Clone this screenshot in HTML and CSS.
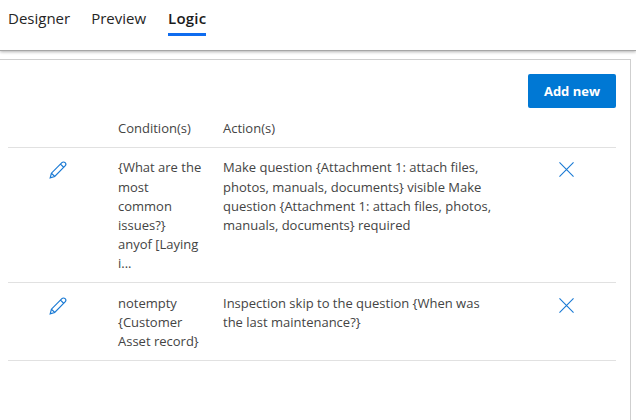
FILE: index.html
```html
<!DOCTYPE html>
<html lang="en">
<head>
    <meta charset="UTF-8">
    <title>Logic</title>
    <link rel="stylesheet" href="styles.css">
</head>
<body>
    <!-- Tabs -->
    <div class="tabs">
        <span class="tab">Designer</span>
        <span class="tab">Preview</span>
        <span class="tab active">Logic</span>
    </div>

    <div class="panel">
        <div class="toolbar">
            <button class="btn">Add new</button>
        </div>

        <div class="row head">
            <div></div>
            <div>Condition(s)</div>
            <div>Action(s)</div>
            <div></div>
        </div>

        <div class="row">
            <div class="icon-cell">
                <svg class="icon pencil" viewBox="0 0 18 18"><path d="M1.2 16.8l1.2-4.6L12.9 1.7c.9-.9 2.3-.9 3.2 0 .9.9.9 2.300 0 3.200L5.700 15.500zM2.400 12.200l3.300 3.300M11.500 3.100l3.400 3.400"/></svg>
            </div>
            <div class="cell">{What are the most common issues?}<br>anyof [Laying i...</div>
            <div class="cell action">Make question {Attachment 1: attach files, photos, manuals, documents} visible Make question {Attachment 1: attach files, photos, manuals, documents} required</div>
            <div class="icon-cell">
                <svg class="icon cross" viewBox="0 0 16 16"><path d="M.5.5l15 15M15.500.5l-15 15"/></svg>
            </div>
        </div>

        <div class="row">
            <div class="icon-cell">
                <svg class="icon pencil" viewBox="0 0 18 18"><path d="M1.2 16.8l1.2-4.6L12.9 1.7c.9-.9 2.3-.9 3.2 0 .9.9.9 2.300 0 3.200L5.700 15.500zM2.400 12.200l3.300 3.300M11.500 3.100l3.400 3.400"/></svg>
            </div>
            <div class="cell">notempty {Customer Asset record}</div>
            <div class="cell action">Inspection skip to the question {When was the last maintenance?}</div>
            <div class="icon-cell">
                <svg class="icon cross" viewBox="0 0 16 16"><path d="M.5.5l15 15M15.500.5l-15 15"/></svg>
            </div>
        </div>
    </div>
</body>
</html>
```

FILE: styles.css
```css
body {
    margin: 0;
    height: 420px;
    overflow: hidden;
    background: #fff;
    font-family: "Open Sans", "Noto Sans", sans-serif;
    color: #444;
}
.tabs {
    display: flex;
    gap: 21px;
    height: 51px;
    padding-left: 8px;
    box-sizing: border-box;
    border-bottom: 1px solid #a6a6a6;
    box-shadow: 0 1px 3px rgba(0, 0, 0, 0.3);
}
.tab {
    height: 36px;
    line-height: 36px;
    font-size: 15px;
    color: #252525;
    box-sizing: border-box;
}
.tab.active {
    margin-left: 1px;
    font-weight: 600;
    letter-spacing: 0.2px;
    color: #1b1b1b;
    border-bottom: 3px solid #0f6cef;
}
.panel {
    width: 631px;
    height: 370px;
    margin-top: 8px;
    padding: 0 14px 0 8px;
    box-sizing: border-box;
    border-top: 1px solid #cfcfcf;
    border-right: 1px solid #cfcfcf;
}
.toolbar {
    display: flex;
    justify-content: flex-end;
    padding-top: 14px;
}
.btn {
    width: 88px;
    height: 34px;
    padding: 0;
    border: none;
    border-radius: 2px;
    background: #0078d4;
    color: #fff;
    font-family: inherit;
    font-size: 13px;
    font-weight: 700;
}
.row {
    display: grid;
    grid-template-columns: 100px 105px 1fr 100px;
    padding: 10.4px 0 8.8px;
    border-bottom: 1px solid #e1e1e1;
    font-size: 13px;
    line-height: 19.2px;
}
.row > div {
    padding-left: 10px;
    padding-right: 10px;
}
.row > .action {
    padding-right: 21px;
}
.head {
    height: 40px;
    box-sizing: border-box;
    padding: 11px 0 0;
}
.cell {
    min-width: 0;
}
.icon-cell {
    display: flex;
    justify-content: center;
    align-items: flex-start;
}
.icon {
    fill: none;
    stroke: #1a7ad4;
    stroke-width: 1.2;
}
.pencil {
    width: 18px;
    height: 18px;
    margin-top: 3px;
}
.cross {
    width: 15px;
    height: 15px;
    margin-top: 4px;
}
```
